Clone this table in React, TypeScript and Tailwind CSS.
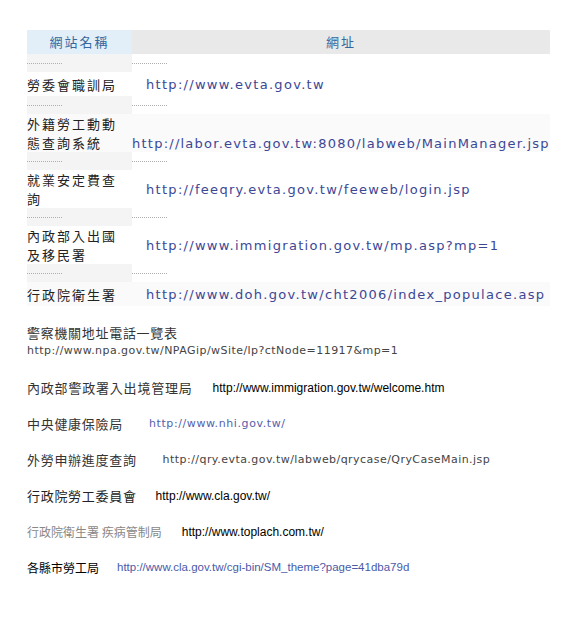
const cjk = "font-['Noto_Sans_CJK_TC','Noto_Sans_CJK_SC',sans-serif]";
const verd = "font-['DejaVu_Sans',sans-serif]";
const arial = "font-['Liberation_Sans','Noto_Sans_CJK_TC',sans-serif]";

type Row = { name: string[]; url: string; tall?: boolean; shaded?: boolean; flush?: boolean };

const rows: Row[] = [
  { name: ["勞委會職訓局"], url: "http://www.evta.gov.tw" },
  { name: ["外籍勞工動動", "態查詢系統"], url: "http://labor.evta.gov.tw:8080/labweb/MainManager.jsp", tall: true, shaded: true, flush: true },
  { name: ["就業安定費查", "詢"], url: "http://feeqry.evta.gov.tw/feeweb/login.jsp", tall: true },
  { name: ["內政部入出國", "及移民署"], url: "http://www.immigration.gov.tw/mp.asp?mp=1", tall: true },
  { name: ["行政院衛生署"], url: "http://www.doh.gov.tw/cht2006/index_populace.asp", shaded: true },
];

function Spacer() {
  return (
    <div className="grid h-[18px] grid-cols-[105px_418px]">
      <div className="bg-[#f4f4f4] pt-[9px]">
        <div className="w-[35px] border-t border-dotted border-[#b0b0b0]" />
      </div>
      <div className="pt-[9px]">
        <div className="w-[35px] border-t border-dotted border-[#b0b0b0]" />
      </div>
    </div>
  );
}

function TableRow({ row }: { row: Row }) {
  return (
    <div
      className={`grid grid-cols-[105px_418px] ${row.tall ? "h-[38px]" : "h-[24px]"} ${
        row.shaded ? "bg-[#fafafa]" : "bg-white"
      }`}
    >
      <div className={`${cjk} flex flex-col justify-center text-[13px] leading-[19px] tracking-[2px] text-[#222]`}>
        {row.name.map((n) => (
          <span key={n} className="whitespace-nowrap">
            {n}
          </span>
        ))}
      </div>
      <div
        className={`${verd} flex overflow-hidden whitespace-nowrap text-[13px] text-[#3c4796] ${
          row.flush
            ? "items-start pt-[22px] leading-[16px] tracking-[1.24px]"
            : "items-center pl-[14px] pt-[1px] tracking-[1.3px]"
        }`}
      >
        {row.url}
      </div>
    </div>
  );
}

export default function App() {
  return (
    <div className="min-h-[622px] bg-white pl-[27px] pt-[30px]">
      {/* table */}
      <div className="w-[523px]">
        <div className={`${cjk} grid h-[24px] grid-cols-[105px_418px] text-[13px] tracking-[2px] text-[#35679f]`}>
          <div className="flex items-center justify-center bg-[#e3eff8]">網站名稱</div>
          <div className="flex items-center justify-center bg-[#e9e9e9]">網址</div>
        </div>
        {rows.map((r) => (
          <div key={r.url}>
            <Spacer />
            <TableRow row={r} />
          </div>
        ))}
      </div>

      {/* other links */}
      <div className="mt-[18px] flex flex-col">
        <div className={`${cjk} text-[13px] leading-[18px] tracking-[0.7px] text-[#333]`}>警察機關地址電話一覽表</div>
        <div className={`${verd} text-[11px] leading-[18px] tracking-[0.45px] text-[#444]`}>
          http://www.npa.gov.tw/NPAGip/wSite/lp?ctNode=11917&amp;mp=1
        </div>

        <div className="mt-[19px] flex h-[18px] items-center">
          <span className={`${cjk} text-[13px] tracking-[0.8px] text-[#333]`}>內政部警政署入出境管理局</span>
          <span className={`${arial} ml-[20px] text-[12px] text-black`}>http://www.immigration.gov.tw/welcome.htm</span>
        </div>

        <div className="mt-[18px] flex h-[18px] items-center">
          <span className={`${cjk} text-[13px] tracking-[0.7px] text-[#333]`}>中央健康保險局</span>
          <span className={`${verd} ml-[26px] text-[11px] tracking-[0.6px] text-[#5560aa]`}>http://www.nhi.gov.tw/</span>
        </div>

        <div className="mt-[18px] flex h-[18px] items-center">
          <span className={`${cjk} text-[13px] tracking-[0.7px] text-[#333]`}>外勞申辦進度查詢</span>
          <span className={`${verd} ml-[26px] text-[11px] tracking-[0.45px] text-[#444]`}>
            http://qry.evta.gov.tw/labweb/qrycase/QryCaseMain.jsp
          </span>
        </div>

        <div className="mt-[18px] flex h-[18px] items-center">
          <span className={`${cjk} text-[13px] tracking-[0.7px] text-[#222]`}>行政院勞工委員會</span>
          <span className={`${arial} ml-[19px] text-[12px] text-black`}>http://www.cla.gov.tw/</span>
        </div>

        <div className="mt-[18px] flex h-[18px] items-center">
          <span className={`${cjk} text-[12px] text-[#888]`}>行政院衛生署 疾病管制局</span>
          <span className={`${arial} ml-[20px] text-[12px] font-medium text-black`}>http://www.toplach.com.tw/</span>
        </div>

        <div className="mt-[18px] flex h-[18px] items-center">
          <span className={`${cjk} text-[12px] text-black`}>各縣市勞工局</span>
          <span className={`${arial} ml-[18px] text-[11.5px] text-[#4a5aa8]`}>
            http://www.cla.gov.tw/cgi-bin/SM_theme?page=41dba79d
          </span>
        </div>
      </div>
    </div>
  );
}
